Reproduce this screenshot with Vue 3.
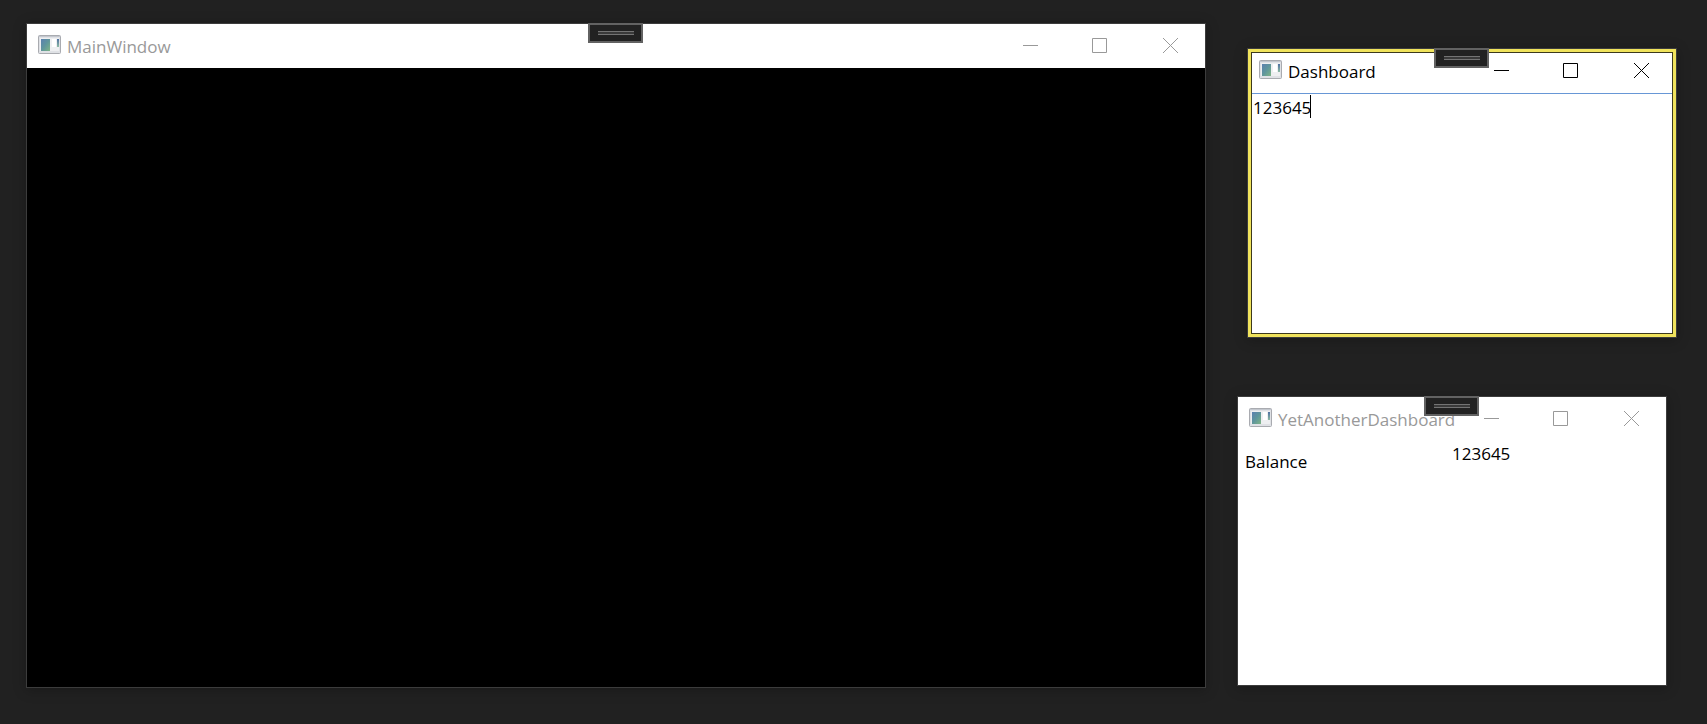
<template>
  <div class="desktop">
    <section class="window">
      <header class="titlebar">
        <svg class="app-icon" viewBox="0 0 23 19">
          <use href="#app-icon" />
        </svg>
        <h1 class="title">MainWindow</h1>
        <div class="controls">
          <button v-for="c in controls" :key="c.name" type="button" :aria-label="c.name">
            <svg viewBox="0 0 16 16"><path :d="c.path" /></svg>
          </button>
        </div>
      </header>
      <div class="body black"></div>
      <div class="handle"><span></span></div>
    </section>

    <div class="side">
      <section class="window active">
        <header class="titlebar">
          <svg class="app-icon" viewBox="0 0 23 19">
            <use href="#app-icon" />
          </svg>
          <h2 class="title">Dashboard</h2>
          <div class="controls">
            <button v-for="c in controls" :key="c.name" type="button" :aria-label="c.name">
              <svg viewBox="0 0 16 16"><path :d="c.path" /></svg>
            </button>
          </div>
        </header>
        <div class="body editor">
          <textarea v-model="balance" aria-label="Balance value" spellcheck="false"></textarea>
          <span class="caret" :style="{ left: `calc(4px + ${balance.length}ch)` }"></span>
        </div>
        <div class="highlight"></div>
        <div class="handle"><span></span></div>
      </section>

      <section class="window another">
        <header class="titlebar">
          <svg class="app-icon" viewBox="0 0 23 19">
            <use href="#app-icon" />
          </svg>
          <h2 class="title">YetAnotherDashboard</h2>
          <div class="controls">
            <button v-for="c in controls" :key="c.name" type="button" :aria-label="c.name">
              <svg viewBox="0 0 16 16"><path :d="c.path" /></svg>
            </button>
          </div>
        </header>
        <div class="body fields">
          <label for="balance">Balance</label>
          <output id="balance">{{ balance }}</output>
        </div>
        <div class="handle"><span></span></div>
      </section>
    </div>

    <svg class="defs" width="0" height="0">
      <defs>
        <linearGradient id="pane" x1="0" y1="0" x2="1" y2="1">
          <stop offset="0" stop-color="#5b80b0" />
          <stop offset="0.5" stop-color="#5f969c" />
          <stop offset="1" stop-color="#7fb585" />
        </linearGradient>
        <linearGradient id="bar" x1="0" y1="0" x2="0" y2="1">
          <stop offset="0" stop-color="#4f70a2" />
          <stop offset="1" stop-color="#8dbba4" />
        </linearGradient>
        <g id="app-icon">
          <rect x="0.5" y="0.5" width="22" height="18" rx="1" fill="#dfe1e5" stroke="#a9abb0" />
          <rect x="1" y="1" width="21" height="1" fill="#c3c7ce" />
          <rect x="2" y="3" width="19" height="13" fill="#eeeff1" />
          <rect x="3" y="4" width="9" height="12" fill="url(#pane)" />
          <rect x="14" y="4" width="4" height="8" fill="#fff" />
          <rect x="19" y="4" width="2" height="8" fill="url(#bar)" />
        </g>
      </defs>
    </svg>
  </div>
</template>

<script setup>
import { ref } from 'vue'

const balance = ref('123645')

const controls = [
  { name: 'Minimize', path: 'M1 7.5H16' },
  { name: 'Maximize', path: 'M0.5 0.5H14.5V14.5H0.5Z' },
  { name: 'Close', path: 'M1 0L16 15M16 0L1 15' }
]
</script>

<style>
body {
  margin: 0;
  background: #212121;
}
</style>

<style scoped>
.desktop {
  box-sizing: border-box;
  display: flex;
  gap: 31px;
  min-height: 100vh;
  padding: 23px 30px 36px 26px;
  background: #212121;
  color: #000;
  font-family: "Open Sans", "Noto Sans", sans-serif;
  font-size: 17px;
  line-height: 24px;
}
.window {
  position: relative;
  flex: 1;
  display: flex;
  flex-direction: column;
  box-sizing: border-box;
  border: 1px solid #3c3c3c;
  background: #fff;
  box-shadow: 0 2px 12px rgba(0, 0, 0, 0.25);
}
.side {
  display: flex;
  flex-direction: column;
  gap: 58px;
  width: 440px;
  padding: 25px 0 2px;
  box-sizing: border-box;
}
.side .window {
  width: 430px;
}
.active {
  align-self: flex-end;
}
.titlebar {
  display: flex;
  align-items: center;
  height: 44px;
  padding-left: 11px;
}
.app-icon {
  flex: none;
  width: 23px;
  height: 19px;
  margin-bottom: 3px;
}
.title {
  min-width: 0;
  margin: 0 0 0 6px;
  padding-top: 1px;
  color: #999;
  font-size: 17px;
  font-weight: 400;
  white-space: nowrap;
}
.controls {
  flex: none;
  display: flex;
  height: 100%;
  margin-left: auto;
}
.controls button {
  display: flex;
  align-items: center;
  justify-content: center;
  width: 70px;
  padding: 0;
  border: 0;
  background: none;
}
.controls svg {
  width: 16px;
  height: 16px;
  fill: none;
  stroke: #999;
}
.active .title {
  color: #000;
}
.active .controls svg {
  stroke: #000;
}
.body {
  flex: 1;
}
.black {
  background: #000;
}
.editor {
  position: relative;
  display: flex;
}
textarea {
  flex: 1;
  padding: 2px 5px;
  border: 0;
  border-top: 1px solid #6797d6;
  outline: none;
  resize: none;
  background: #fff;
  color: #000;
  font: inherit;
  caret-color: transparent;
}
.caret {
  position: absolute;
  top: 2px;
  width: 1px;
  height: 23px;
  background: #000;
}
.fields {
  display: grid;
  grid-template-columns: 1fr 1fr;
  align-items: start;
  padding-top: 1px;
}
.fields label {
  padding: 8px 7px;
}
.highlight {
  position: absolute;
  inset: 0;
  border: 3px solid #f0e35c;
  box-shadow: inset 0 0 0 1px #3d3a1c;
  pointer-events: none;
}
.handle {
  position: absolute;
  top: -1px;
  left: calc(50% - 28px);
  display: flex;
  align-items: center;
  justify-content: center;
  box-sizing: border-box;
  width: 55px;
  height: 20px;
  border: 2px solid #626262;
  background: #222;
}
.handle span {
  width: 36px;
  height: 2px;
  border: solid #747474;
  border-width: 1px 0;
  background: #3a3a3a;
}
.defs {
  position: absolute;
}
</style>
